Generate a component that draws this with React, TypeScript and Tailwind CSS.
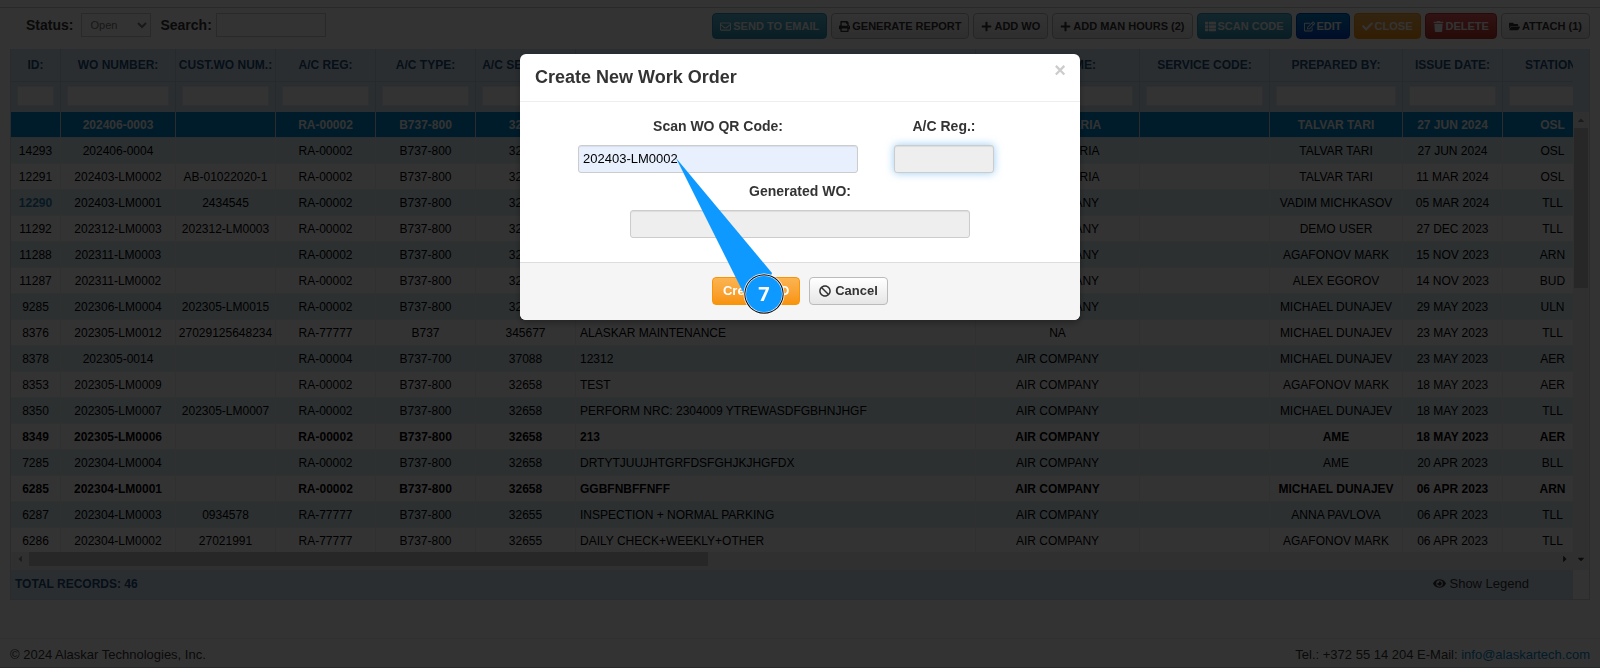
import { useState } from "react";
import type { ReactNode } from "react";
import clsx from "clsx";
import {
  FaRegEnvelope, FaPrint, FaPlus, FaThList, FaRegEdit, FaCheck, FaTrash,
  FaFolderOpen, FaEye, FaBan, FaCaretUp, FaCaretDown, FaCaretLeft, FaCaretRight,
} from "react-icons/fa";

interface WorkOrder {
  id: string;
  wo: string;
  cust: string;
  reg: string;
  type: string;
  serial: string;
  desc: string;
  company: string;
  by: string;
  date: string;
  station: string;
  bold?: boolean;
  linked?: boolean;
}

const COLUMNS = [
  { label: "ID:",           width: "w-[50px]"  },
  { label: "WO NUMBER:",    width: "w-[115px]" },
  { label: "CUST.WO NUM.:", width: "w-[100px]" },
  { label: "A/C REG:",      width: "w-[100px]" },
  { label: "A/C TYPE:",     width: "w-[100px]" },
  { label: "A/C SER.NUM.:", width: "w-[100px]" },
  { label: "DESCRIPTION:",  width: "w-[400px]" },
  { label: "COMP.NAME:",    width: "w-[164px]" },
  { label: "SERVICE CODE:", width: "w-[130px]" },
  { label: "PREPARED BY:",  width: "w-[133px]" },
  { label: "ISSUE DATE:",   width: "w-[100px]" },
  { label: "STATION:",      width: "w-[100px]" },
];

const ORDERS: WorkOrder[] = [
  { id: "",      wo: "202406-0003",   cust: "",               reg: "RA-00002", type: "B737-800", serial: "32658",  desc: "",                                      company: "AIR BULGARIA", by: "TALVAR TARI",     date: "27 JUN 2024", station: "OSL", bold: true },
  { id: "14293", wo: "202406-0004",   cust: "",               reg: "RA-00002", type: "B737-800", serial: "32658",  desc: "",                                      company: "AIR BULGARIA", by: "TALVAR TARI",     date: "27 JUN 2024", station: "OSL" },
  { id: "12291", wo: "202403-LM0002", cust: "AB-01022020-1",  reg: "RA-00002", type: "B737-800", serial: "32658",  desc: "",                                      company: "AIR BULGARIA", by: "TALVAR TARI",     date: "11 MAR 2024", station: "OSL" },
  { id: "12290", wo: "202403-LM0001", cust: "2434545",        reg: "RA-00002", type: "B737-800", serial: "32658",  desc: "",                                      company: "AIR COMPANY",  by: "VADIM MICHKASOV", date: "05 MAR 2024", station: "TLL", linked: true },
  { id: "11292", wo: "202312-LM0003", cust: "202312-LM0003",  reg: "RA-00002", type: "B737-800", serial: "32658",  desc: "",                                      company: "AIR COMPANY",  by: "DEMO USER",       date: "27 DEC 2023", station: "TLL" },
  { id: "11288", wo: "202311-LM0003", cust: "",               reg: "RA-00002", type: "B737-800", serial: "32658",  desc: "",                                      company: "AIR COMPANY",  by: "AGAFONOV MARK",   date: "15 NOV 2023", station: "ARN" },
  { id: "11287", wo: "202311-LM0002", cust: "",               reg: "RA-00002", type: "B737-800", serial: "32658",  desc: "",                                      company: "AIR COMPANY",  by: "ALEX EGOROV",     date: "14 NOV 2023", station: "BUD" },
  { id: "9285",  wo: "202306-LM0004", cust: "202305-LM0015",  reg: "RA-00002", type: "B737-800", serial: "32658",  desc: "",                                      company: "AIR COMPANY",  by: "MICHAEL DUNAJEV", date: "29 MAY 2023", station: "ULN" },
  { id: "8376",  wo: "202305-LM0012", cust: "27029125648234", reg: "RA-77777", type: "B737",     serial: "345677", desc: "ALASKAR MAINTENANCE",                   company: "NA",           by: "MICHAEL DUNAJEV", date: "23 MAY 2023", station: "TLL" },
  { id: "8378",  wo: "202305-0014",   cust: "",               reg: "RA-00004", type: "B737-700", serial: "37088",  desc: "12312",                                 company: "AIR COMPANY",  by: "MICHAEL DUNAJEV", date: "23 MAY 2023", station: "AER" },
  { id: "8353",  wo: "202305-LM0009", cust: "",               reg: "RA-00002", type: "B737-800", serial: "32658",  desc: "TEST",                                  company: "AIR COMPANY",  by: "AGAFONOV MARK",   date: "18 MAY 2023", station: "AER" },
  { id: "8350",  wo: "202305-LM0007", cust: "202305-LM0007",  reg: "RA-00002", type: "B737-800", serial: "32658",  desc: "PERFORM NRC: 2304009 YTREWASDFGBHNJHGF", company: "AIR COMPANY", by: "MICHAEL DUNAJEV", date: "18 MAY 2023", station: "TLL" },
  { id: "8349",  wo: "202305-LM0006", cust: "",               reg: "RA-00002", type: "B737-800", serial: "32658",  desc: "213",                                   company: "AIR COMPANY",  by: "AME",             date: "18 MAY 2023", station: "AER", bold: true },
  { id: "7285",  wo: "202304-LM0004", cust: "",               reg: "RA-00002", type: "B737-800", serial: "32658",  desc: "DRTYTJUUJHTGRFDSFGHJKJHGFDX",           company: "AIR COMPANY",  by: "AME",             date: "20 APR 2023", station: "BLL" },
  { id: "6285",  wo: "202304-LM0001", cust: "",               reg: "RA-00002", type: "B737-800", serial: "32658",  desc: "GGBFNBFFNFF",                           company: "AIR COMPANY",  by: "MICHAEL DUNAJEV", date: "06 APR 2023", station: "ARN", bold: true },
  { id: "6287",  wo: "202304-LM0003", cust: "0934578",        reg: "RA-77777", type: "B737-800", serial: "32655",  desc: "INSPECTION + NORMAL PARKING",           company: "AIR COMPANY",  by: "ANNA PAVLOVA",    date: "06 APR 2023", station: "TLL" },
  { id: "6286",  wo: "202304-LM0002", cust: "27021991",       reg: "RA-77777", type: "B737-800", serial: "32655",  desc: "DAILY CHECK+WEEKLY+OTHER",              company: "AIR COMPANY",  by: "AGAFONOV MARK",   date: "06 APR 2023", station: "TLL" },
];

const TONES = {
  plain:   "border-[#bbb] bg-linear-to-b from-white to-[#e6e6e6] text-[#333]",
  info:    "border-[#2f96b4] bg-linear-to-b from-[#5bc0de] to-[#2f96b4] text-white",
  primary: "border-[#0044cc] bg-linear-to-b from-[#0088cc] to-[#0044cc] text-white",
  warning: "border-[#f89406] bg-linear-to-b from-[#fbb450] to-[#f89406] text-white",
  danger:  "border-[#bd362f] bg-linear-to-b from-[#ee5f5b] to-[#bd362f] text-white",
};

function ToolButton({ tone = "plain", icon, children }: { tone?: keyof typeof TONES; icon: ReactNode; children: ReactNode }) {
  return (
    <button className={clsx("flex h-[26px] items-center gap-[2px] rounded border px-[7px] text-[11px] font-bold whitespace-nowrap", TONES[tone])}>
      {icon}
      {children}
    </button>
  );
}

function Toolbar() {
  return (
    <div className="flex items-start justify-between border-t border-[#ccc] pt-[5px] pr-[10px] pl-[26px]">
      <div className="flex items-center">
        <label htmlFor="status" className="text-sm font-bold">Status:</label>
        <select id="status" defaultValue="Open" className="ml-2 h-6 w-[70px] border border-[#ccc] bg-white pl-1 text-[11px] text-[#777]">
          <option>Open</option>
          <option>Closed</option>
        </select>
        <label htmlFor="search" className="ml-[9px] text-sm font-bold">Search:</label>
        <input id="search" type="text" className="ml-1 h-6 w-[110px] border border-[#ccc] bg-white px-1 text-xs" />
      </div>
      <div className="flex gap-1">
        <ToolButton tone="info" icon={<FaRegEnvelope />}>SEND TO EMAIL</ToolButton>
        <ToolButton icon={<FaPrint />}>GENERATE REPORT</ToolButton>
        <ToolButton icon={<FaPlus />}>ADD WO</ToolButton>
        <ToolButton icon={<FaPlus />}>ADD MAN HOURS (2)</ToolButton>
        <ToolButton tone="info" icon={<FaThList />}>SCAN CODE</ToolButton>
        <ToolButton tone="primary" icon={<FaRegEdit />}>EDIT</ToolButton>
        <ToolButton tone="warning" icon={<FaCheck />}>CLOSE</ToolButton>
        <ToolButton tone="danger" icon={<FaTrash />}>DELETE</ToolButton>
        <ToolButton icon={<FaFolderOpen />}>ATTACH (1)</ToolButton>
      </div>
    </div>
  );
}

function OrdersTable() {
  return (
    <table className="w-[1592px] table-fixed border-separate border-spacing-0 text-center text-xs text-black">
      <thead className="bg-[#d5e6f3] text-[#1d4f7c]">
        <tr className="h-[33px]">
          {COLUMNS.map((c) => (
            <th key={c.label} scope="col" className={clsx("border-r border-b border-[#bfd3e2] font-bold whitespace-nowrap", c.width)}>{c.label}</th>
          ))}
        </tr>
        <tr className="h-[30px]">
          {COLUMNS.map((c) => (
            <td key={c.label} className="border-r border-[#bfd3e2] px-[6px] pb-[2px]">
              <input type="text" aria-label={c.label} className="block h-5 w-full border border-[#e4ecf2] bg-white px-1" />
            </td>
          ))}
        </tr>
      </thead>
      <tbody>
        {ORDERS.map((o, i) => {
          const selected = i === 0;
          const cell = clsx("border-r border-b whitespace-nowrap", selected ? "border-r-[#ddd] border-b-[#d5e6f3]" : "border-[#e8eef0]");
          return (
            <tr
              key={o.wo}
              className={clsx("h-[26px]", o.bold && "font-bold", selected ? "bg-[#0088cc] text-white" : i % 2 ? "bg-[#dbeef3]" : "bg-white")}
            >
              <td className={cell}>{o.linked ? <a href="#wo" className="font-bold text-[#2a7fb0]">{o.id}</a> : o.id}</td>
              <td className={cell}>{o.wo}</td>
              <td className={cell}>{o.cust}</td>
              <td className={cell}>{o.reg}</td>
              <td className={cell}>{o.type}</td>
              <td className={cell}>{o.serial}</td>
              <td className={clsx(cell, "pl-1 text-left")}>{o.desc}</td>
              <td className={cell}>{o.company}</td>
              <td className={cell} />
              <td className={cell}>{o.by}</td>
              <td className={cell}>{o.date}</td>
              <td className={cell}>{o.station}</td>
            </tr>
          );
        })}
      </tbody>
    </table>
  );
}

function OrdersGrid() {
  return (
    <section className="mx-[10px] mt-[10px] border-x border-b border-[#ccd8e0]">
      <div className="flex h-[503px]">
        <div className="min-w-0 flex-1 overflow-hidden">
          <OrdersTable />
        </div>
        <div className="flex w-4 flex-col items-center bg-[#f1f1f1] text-[10px] text-[#888]">
          <div className="h-[63px] w-full bg-[#d5e6f3]" />
          <FaCaretUp className="my-[3px]" />
          <div className="h-[160px] w-[14px] bg-[#c1c1c1]" />
        </div>
      </div>
      <div className="flex h-[18px] items-start bg-[#f1f1f1] text-[10px] text-[#333]">
        <FaCaretLeft className="mx-1 mt-[2px] text-[#888]" />
        <div className="h-[14px] w-[43%] bg-[#c1c1c1]" />
        <FaCaretRight className="mt-[2px] ml-auto" />
        <FaCaretDown className="mt-[2px] mr-[3px] ml-[6px]" />
      </div>
      <div className="mr-4 flex h-[29px] items-center justify-between bg-[#d5e6f3] pr-11 pb-[2px] pl-1">
        <p className="text-xs font-bold text-[#1d4f7c]">TOTAL RECORDS: 46</p>
        <button className="flex items-center gap-[3px] text-[13px] text-[#333]">
          <FaEye /> Show Legend
        </button>
      </div>
    </section>
  );
}

function Callout() {
  return (
    <svg className="absolute top-[100px] left-[150px] h-[166px] w-[120px]" viewBox="0 0 120 166" aria-label="Step 7">
      <path d="M6 4 L102 119 L94 140 L74 140 Z" fill="#0d99ff" />
      <circle cx="94" cy="140" r="20.5" fill="#fff" />
      <circle cx="94" cy="140" r="19.7" fill="#111" />
      <circle cx="94" cy="140" r="18.6" fill="#fff" />
      <circle cx="94" cy="140" r="18" fill="#0d99ff" />
      <text x="94" y="147" textAnchor="middle" fill="#fff" fontFamily="Open Sans, sans-serif" fontSize="20" fontWeight="700">7</text>
    </svg>
  );
}

const FIELD = "block h-7 w-full rounded-[3px] border border-[#ccc] px-1 pb-[2px] text-[13px] outline-none";

function CreateDialog() {
  const [code, setCode] = useState("202403-LM0002");

  return (
    <div className="fixed inset-0 bg-black/80">
      <div role="dialog" aria-labelledby="dialog-title" className="relative mx-auto mt-[54px] w-[560px] rounded-md bg-white text-[#333] shadow-[0_3px_7px_rgba(0,0,0,0.3)]">
        <header className="flex h-12 items-start justify-between border-b border-[#eee] pr-[14px] pl-[15px]">
          <h2 id="dialog-title" className="pt-[9px] text-lg font-bold">Create New Work Order</h2>
          <button aria-label="Close" className="pt-[6px] text-xl leading-5 font-bold text-[#ccc]">×</button>
        </header>
        <div className="px-[58px] pt-[14px] pb-6 text-center text-sm">
          <div className="flex gap-9">
            <div className="w-[280px]">
              <label htmlFor="qr" className="mb-[9px] block leading-5 font-bold">Scan WO QR Code:</label>
              <input id="qr" type="text" value={code} onChange={(e) => setCode(e.target.value)} className={clsx(FIELD, "bg-[#e8f0fe] text-black shadow-[inset_0_1px_1px_rgba(0,0,0,0.075)]")} />
            </div>
            <div className="w-[100px]">
              <label htmlFor="reg" className="mb-[9px] block leading-5 font-bold">A/C Reg.:</label>
              <input id="reg" type="text" readOnly className={clsx(FIELD, "bg-[#eee] shadow-[inset_0_1px_1px_rgba(0,0,0,0.075),0_0_8px_rgba(82,168,236,0.6)]")} />
            </div>
          </div>
          <div className="mx-auto mt-2 w-[340px]">
            <label htmlFor="generated" className="mb-[9px] block leading-5 font-bold">Generated WO:</label>
            <input id="generated" type="text" readOnly className={clsx(FIELD, "bg-[#eee] shadow-[inset_0_1px_1px_rgba(0,0,0,0.075)]")} />
          </div>
        </div>
        <footer className="flex justify-center gap-[9px] rounded-b-md border-t border-[#ddd] bg-[#f5f5f5] pt-[14px] pb-[15px] text-[13px] font-bold">
          <button className={clsx("h-7 w-[88px] rounded border pb-[1px]", TONES.warning)}>Create WO</button>
          <button className={clsx("flex h-7 items-center gap-1 rounded border px-[9px] pb-[1px]", TONES.plain)}>
            <FaBan className="text-xs" /> Cancel
          </button>
        </footer>
        <Callout />
      </div>
    </div>
  );
}

export default function App() {
  return (
    <div className="bg-white pt-[7px] font-['Liberation_Sans',Arial,sans-serif] text-[#333]">
      <Toolbar />
      <OrdersGrid />
      <footer className="mt-[38px] flex justify-between border-y border-t-[#eee] border-b-[#ccc] px-[10px] pt-[6px] pb-[2px] text-[13px] leading-5">
        <p>© 2024 Alaskar Technologies, Inc.</p>
        <p>
          Tel.: +372 55 14 204 E-Mail: <a href="mailto:info@alaskartech.com" className="text-[#0088cc]">info@alaskartech.com</a>
        </p>
      </footer>
      <CreateDialog />
    </div>
  );
}
